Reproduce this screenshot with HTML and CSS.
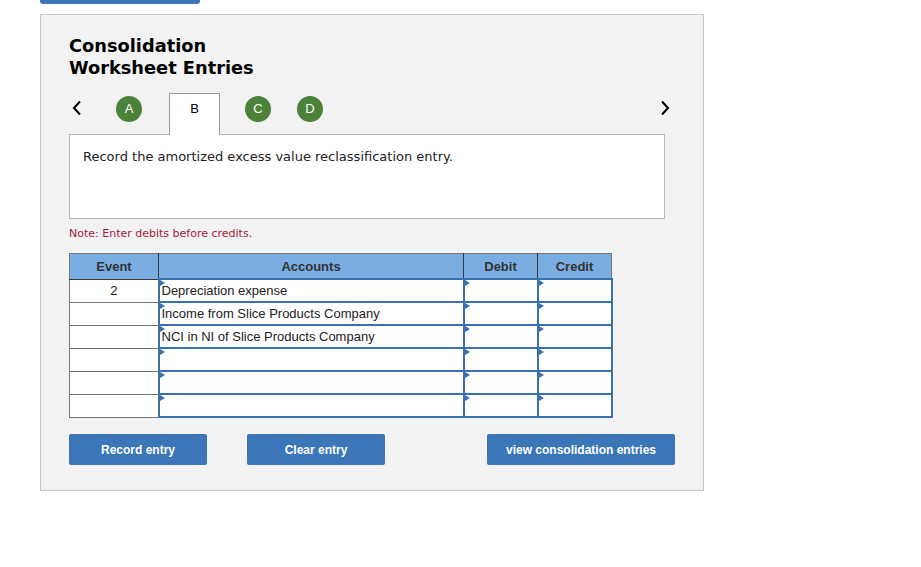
FILE: index.html
```html
<!DOCTYPE html>
<html lang="en"><head>
<meta charset="utf-8">
<title>Consolidation Worksheet Entries</title>
<link rel="stylesheet" href="styles.css">
</head><body>
<div class="topbar"></div>
<div class="panel">
<h2 class="title">Consolidation<br>Worksheet Entries</h2>
<div class="tabs">
<svg class="arrow" width="12" height="16" viewBox="0 0 12 16"><polyline points="9,1.5 3,8 9,14.5" fill="none" stroke="#000" stroke-width="2"/></svg>
<div class="tablist">
<span class="dot">A</span>
<span class="tab">B</span>
<span class="dot">C</span>
<span class="dot">D</span>
</div>
<svg class="arrow" width="12" height="16" viewBox="0 0 12 16"><polyline points="3,1.5 9,8 3,14.5" fill="none" stroke="#000" stroke-width="2"/></svg>
</div>
<div class="prompt">Record the amortized excess value reclassification entry.</div>
<p class="note">Note: Enter debits before credits.</p>
<table class="journal">
<thead>
<tr><th class="c-event">Event</th><th class="c-acct">Accounts</th><th class="c-num">Debit</th><th class="c-num">Credit</th></tr>
</thead>
<tbody>
<tr><td class="ev">2</td><td class="in">Depreciation expense</td><td class="in"></td><td class="in"></td></tr>
<tr><td class="ev"></td><td class="in">Income from Slice Products Company</td><td class="in"></td><td class="in"></td></tr>
<tr><td class="ev"></td><td class="in">NCI in NI of Slice Products Company</td><td class="in"></td><td class="in"></td></tr>
<tr><td class="ev"></td><td class="in"></td><td class="in"></td><td class="in"></td></tr>
<tr><td class="ev"></td><td class="in"></td><td class="in"></td><td class="in"></td></tr>
<tr><td class="ev"></td><td class="in"></td><td class="in"></td><td class="in"></td></tr>
</tbody>
</table>
<div class="actions">
<button class="btn">Record entry</button>
<button class="btn">Clear entry</button>
<button class="btn wide">view consolidation entries</button>
</div>
</div>
</body></html>
```
FILE: styles.css
```css
body {
	margin: 0;
	background: #fff;
	font-family: "Liberation Sans", Arial, sans-serif;
}

.topbar {
	width: 160px;
	height: 4px;
	margin-left: 40px;
	background: #3a75b8;
	border-radius: 0 0 3px 3px;
}

.panel {
	width: 596px;
	margin: 10px 0 0 40px;
	padding: 20px 38px 25px 28px;
	background: #f2f2f2;
	border: 1px solid #c4c4c4;
}

.title {
	margin: 0;
	font-family: "DejaVu Sans", Verdana, sans-serif;
	font-size: 17.8px;
	line-height: 22px;
	font-weight: bold;
	color: #000;
}

.tabs {
	display: flex;
	align-items: center;
	justify-content: space-between;
	margin-top: 15px;
	height: 40px;
}

.arrow {
	display: block;
	margin: 0 0 12px 2px;
}

.tabs .arrow:last-child {
	margin: 0 -6px 12px 0;
}

.tablist {
	flex: 1;
	display: flex;
	align-items: flex-end;
	height: 40px;
	margin-left: 33px;
}

.dot {
	width: 26px;
	height: 26px;
	margin-bottom: 12px;
	border-radius: 50%;
	background: #4b8139;
	color: #fff;
	font-size: 13px;
	line-height: 26px;
	text-align: center;
}

.tab {
	width: 49px;
	height: 41px;
	margin: 0 25px 0 27px;
	background: #fff;
	border: 1px solid #9a9a9a;
	border-bottom: none;
	font-size: 13px;
	line-height: 30px;
	text-align: center;
	position: relative;
	top: 1px;
	z-index: 1;
}

.tablist .dot + .dot {
	margin-left: 26px;
}

.prompt {
	height: 85px;
	padding: 14px 13px 0;
	box-sizing: border-box;
	background: #fff;
	border: 1px solid #b8b8b8;
	font-family: "DejaVu Sans", Verdana, sans-serif;
	font-size: 13px;
	color: #222;
}

.note {
	margin: 8px 0 13px;
	font-family: "DejaVu Sans", Verdana, sans-serif;
	font-size: 11px;
	color: #a3193f;
}

.journal {
	border-collapse: collapse;
	font-size: 13px;
	color: #222;
}

.journal th {
	height: 24px;
	padding: 0;
	background: #7aaee3;
	border: 1px solid #3a3a3a;
	border-top-color: #777;
	font-size: 13px;
	font-weight: bold;
	color: #333;
}

.journal th:first-child {
	border-left-color: #777;
}

.journal th:last-child {
	border-right-color: #777;
}

.c-event {
	width: 88px;
}

.c-acct {
	width: 304px;
}

.c-num {
	width: 73px;
}

.journal td {
	height: 21px;
	padding: 0 0 0 2px;
	background: #fff;
	border: 1px solid #777;
}

.journal td.ev {
	text-align: center;
	padding: 0;
}

.journal td.in {
	position: relative;
	border: 2px solid #3a70b0;
	box-shadow: 0 0 0 1px #777;
}

.journal td.in::before {
	content: "";
	position: absolute;
	left: 0;
	top: 0;
	border-left: 5px solid #3a70b0;
	border-top: 3px solid transparent;
	border-bottom: 3px solid transparent;
}

.actions {
	display: flex;
	margin-top: 16px;
}

.btn {
	flex-shrink: 0;
	width: 138px;
	height: 31px;
	margin-right: 40px;
	background: #3a76b8;
	border: none;
	border-radius: 2px;
	color: #fff;
	font-family: "Liberation Sans", Arial, sans-serif;
	font-size: 12px;
	font-weight: bold;
}

.btn.wide {
	width: 188px;
	margin-left: 62px;
	margin-right: 0;
}
```
